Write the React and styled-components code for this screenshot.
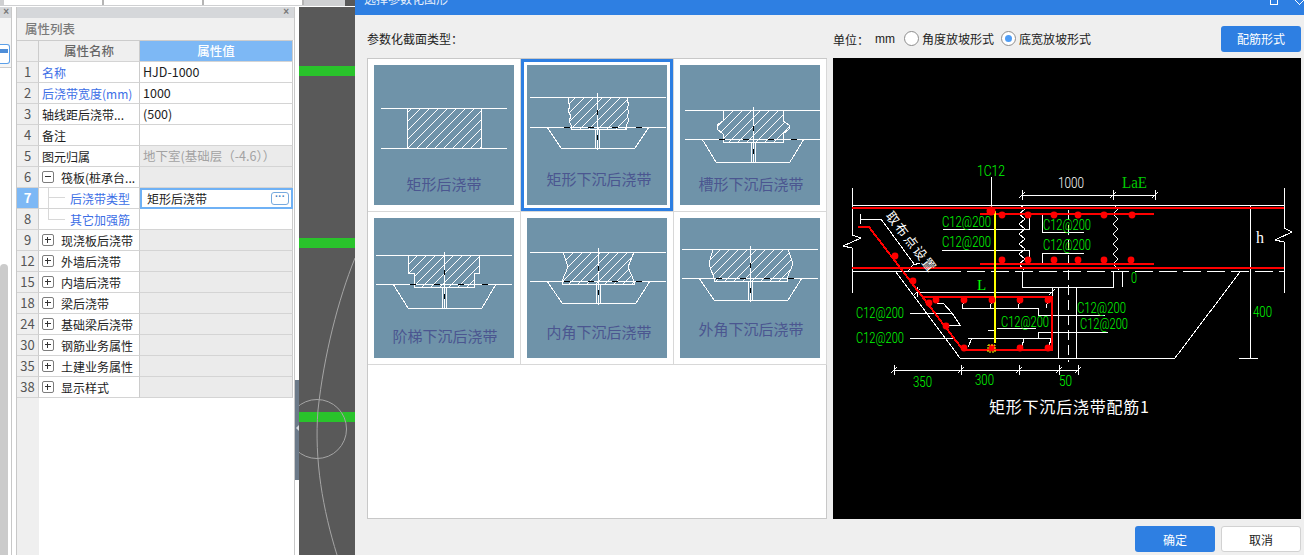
import React from "react";
import styled, { createGlobalStyle } from "styled-components";

const Global = createGlobalStyle`
html,body{margin:0;padding:0;background:#fff;}
body{font-family:"Noto Sans CJK SC","Liberation Sans",sans-serif;font-size:13px;color:#222;}
*{box-sizing:border-box;}
`;

const Page = styled.div`
width:1304px;
height:555px;
display:flex;
overflow:hidden;
`;

/* ---------- left dock ---------- */
const Workspace = styled.div`
width:355px;
height:555px;
display:flex;
flex-direction:column;
flex-shrink:0;
`;
const TopTabs = styled.div`
height:6px;
display:flex;
background:#cfd0d2;
`;
const Tab = styled.div`
width:100px;
height:5px;
background:#fff;
border-right:2px solid #b5b5b5;
margin-left:${p => (p.$first ? "4px" : "0")};
`;
const TabRest = styled.div`
flex:1;
`;
const TabDark = styled.div`
width:10px;
background:#595959;
`;
const DockRow = styled.div`
flex:1;
display:flex;
min-height:0;
padding-top:1px;
`;
const SidePane = styled.div`
width:12px;
margin-right:4px;
border-right:1px solid #c8c8c8;
display:flex;
flex-direction:column;
flex-shrink:0;
`;
const CloseBar = styled.div`
height:11px;
background:#d5d7da;
color:#777;
font:bold 10px/10px "Liberation Sans",sans-serif;
display:flex;
justify-content:flex-end;
padding-right:${p => p.$pad || 4}px;
flex-shrink:0;
`;
const SideTools = styled.div`
height:50px;
background:#f5f5f5;
border-bottom:1px solid #ccc;
padding-top:26px;
`;
const SideIcon = styled.div`
width:10px;
height:20px;
background:#fff;
border:1px solid #5b9fe8;
border-left:none;
border-radius:0 3px 3px 0;
padding:4px 1px 0 0;
&::before{
  content:"";
  display:block;
  height:4px;
  background:#4f8ed8;
}
`;
const SideTrack = styled.div`
flex:1;
padding-top:196px;
`;
const SideThumb = styled.div`
width:8px;
height:100%;
background:#cbcbcb;
border-radius:4px 4px 0 0;
`;
const PropPane = styled.div`
width:279px;
border-left:1px solid #c8c8c8;
border-right:1px solid #c8c8c8;
display:flex;
flex-direction:column;
flex-shrink:0;
`;
const PaneTitle = styled.div`
height:22px;
background:#f0f0f0;
color:#7a7a7a;
font-weight:500;
font-size:12.5px;
line-height:22px;
padding-left:8px;
flex-shrink:0;
`;
const Table = styled.div`
flex:1;
width:276px;
position:relative;
display:flex;
flex-direction:column;
background:linear-gradient(to right,#efefef 22px,#fff 22px);
`;
const Row = styled.div`
height:${p => (p.$head ? 22 : 21)}px;
display:grid;
grid-template-columns:22px 101px 153px;
border-top:${p => (p.$head ? "1px solid #ccc" : "none")};
flex-shrink:0;
`;
const NumCell = styled.div`
background:${p => (p.$active ? "#7db8f5" : "#efefef")};
color:${p => (p.$active ? "#fff" : "#555")};
font-weight:${p => (p.$active ? 700 : 400)};
font-size:13px;
line-height:20px;
text-align:center;
border-right:1px solid #ccc;
border-bottom:1px solid #d4d4d4;
`;
const HeadCell = styled.div`
background:${p => (p.$value ? "#7db8f5" : "#efefef")};
color:${p => (p.$value ? "#fff" : "#666")};
font-weight:500;
font-size:12.5px;
line-height:20px;
text-align:center;
border-right:1px solid #ccc;
border-bottom:1px solid #d4d4d4;
`;
const NameCell = styled.div`
display:flex;
align-items:center;
position:relative;
padding-left:${p => (p.$child ? 31 : 3)}px;
color:${p => (p.$blue ? "#3c6ee6" : "#1c1c1c")};
font-size:12px;
white-space:nowrap;
overflow:hidden;
border-right:1px solid #ccc;
border-bottom:1px solid #d4d4d4;
background:#fff;
`;
const TreeLine = styled.span`
position:absolute;
left:9px;
top:${p => (p.$last ? 0 : -1)}px;
width:17px;
height:${p => (p.$last ? 11 : 21)}px;
border-left:1px solid #d8d8d8;
&::after{
  content:"";
  position:absolute;
  left:0;
  top:10px;
  width:16px;
  border-top:1px solid #d8d8d8;
}
`;
const Expander = styled.span`
width:12px;
height:12px;
border:1px solid #7d7d7d;
border-radius:2px;
margin-right:7px;
flex-shrink:0;
position:relative;
background:#fff;
&::before{
  content:"";
  position:absolute;
  left:2px;
  top:4px;
  width:6px;
  border-top:1px solid #333;
}
&::after{
  content:"";
  display:${p => (p.$open ? "none" : "block")};
  position:absolute;
  left:4px;
  top:2px;
  height:6px;
  border-left:1px solid #333;
}
`;
const ValueCell = styled.div`
padding-left:3px;
font-size:12.5px;
line-height:20px;
white-space:nowrap;
overflow:hidden;
color:${p => (p.$muted ? "#a2a2a2" : "#1c1c1c")};
background:${p => (p.$grey ? "#ebebeb" : "#fff")};
border-right:1px solid #ccc;
border-bottom:1px solid #d4d4d4;
`;
const EditCell = styled.div`
display:flex;
align-items:center;
justify-content:space-between;
padding:0 2px 0 5px;
border:2px solid #6fb1f5;
font-size:12px;
background:#fff;
`;
const MoreButton = styled.span`
width:18px;
height:13px;
border:1px solid #76a9de;
border-radius:3px;
color:#4a84c4;
font:bold 10px/7px "Liberation Sans",sans-serif;
text-align:center;
`;
const Gutter = styled.div`
width:4px;
position:relative;
flex-shrink:0;
`;
const Handle = styled.div`
position:absolute;
left:0;
top:373px;
width:4px;
height:100px;
background:#6c7a89;
&::after{
  content:"";
  position:absolute;
  left:1px;
  top:45px;
  border:3px solid transparent;
  border-right-color:#d5d9de;
  border-left:none;
}
`;
const Canvas = styled.svg`
width:56px;
height:548px;
background:#595959;
display:block;
flex-shrink:0;
`;

/* ---------- dialog ---------- */
const Dialog = styled.div`
width:949px;
height:555px;
background:#efefef;
display:flex;
flex-direction:column;
flex-shrink:0;
`;
const TitleBar = styled.div`
height:15px;
background:#2e7fe2;
color:#e8f0fb;
display:flex;
justify-content:space-between;
padding:0 0 0 9px;
overflow:hidden;
flex-shrink:0;
`;
const TitleText = styled.div`
font-size:12px;
line-height:16px;
margin-top:-9px;
`;
const WinControls = styled.div`
display:flex;
gap:17px;
`;
const MaxIcon = styled.span`
width:8px;
height:5px;
border:1px solid #fff;
border-top:none;
`;
const CloseIcon = styled.svg`
width:9px;
height:5px;
`;
const DialogBody = styled.div`
flex:1;
display:grid;
grid-template-columns:460px 468px;
column-gap:6px;
padding:0 3px 0 12px;
`;
const ColHead = styled.div`
height:43px;
display:flex;
align-items:center;
font-size:12px;
padding-top:4px;
`;
const RightHead = styled(ColHead)`
padding-top:0;
`;
const UnitLabel = styled.span`
margin-top:5px;
width:42px;
`;
const UnitValue = styled.span`
margin-top:5px;
width:29px;
font-family:"Liberation Sans",sans-serif;
font-size:12px;
`;
const RadioWrap = styled.label`
display:flex;
align-items:center;
margin-top:3px;
margin-right:7px;
`;
const RadioDot = styled.span`
width:15px;
height:15px;
border-radius:50%;
background:#fff;
border:1px solid #8d8d8d;
margin-right:3px;
display:flex;
align-items:center;
justify-content:center;
&::after{
  content:"";
  display:${p => (p.$on ? "block" : "none")};
  width:7px;
  height:7px;
  border-radius:50%;
  background:#4f9df5;
}
`;
const Btn = styled.button`
width:80px;
height:26px;
border-radius:3px;
font-family:inherit;
font-size:12px;
padding:0;
background:${p => (p.$plain ? "#fff" : "#2e7fe2")};
color:${p => (p.$plain ? "#222" : "#fff")};
border:${p => (p.$plain ? "1px solid #d2d2d2" : "none")};
`;
const SpecButton = styled(Btn)`
margin-left:auto;
margin-top:4px;
`;
const ThumbGrid = styled.div`
height:461px;
background:#fff;
border:1px solid #c8c8c8;
display:grid;
grid-template-columns:repeat(3,153px);
grid-auto-rows:153px;
align-content:start;
`;
const ThumbCell = styled.div`
padding:6px;
border-right:1px solid #d8d8d8;
border-bottom:1px solid #d8d8d8;
box-shadow:${p => (p.$selected ? "inset 0 0 0 3px #2e7fe2" : "none")};
`;
const ThumbSvg = styled.svg`
width:140px;
height:140px;
display:block;
background:#6f93a9;
`;
const ThumbCaption = styled.text`
fill:#4b5690;
font-size:15px;
text-anchor:middle;
font-family:"Noto Sans CJK SC",sans-serif;
`;
const CadPanel = styled.svg`
width:468px;
height:461px;
display:block;
background:#000;
`;
const CadText = styled.text`
fill:${p => p.$color || "#0f0"};
font-family:${p => (p.$serif ? '"Liberation Serif",serif' : 'Roboto,sans-serif')};
font-weight:${p => (p.$serif ? 400 : 300)};
font-size:${p => p.$size || 14}px;
`;
const CadTitle = styled.text`
fill:#fff;
font-family:"Noto Sans CJK SC",sans-serif;
font-size:${p => p.$size || 16}px;
`;
const Footer = styled.div`
height:36px;
display:flex;
justify-content:flex-end;
align-items:flex-start;
gap:6px;
padding:7px 3px 0 0;
flex-shrink:0;
`;

const rows = [
  { n: 1, name: "名称", blue: true, value: "HJD-1000" },
  { n: 2, name: "后浇带宽度(mm)", blue: true, value: "1000" },
  { n: 3, name: "轴线距后浇带...", value: "(500)" },
  { n: 4, name: "备注" },
  { n: 5, name: "图元归属", value: "地下室(基础层（-4.6））", muted: true, grey: true },
  { n: 6, name: "筏板(桩承台...", expander: "open", grey: true },
  { n: 7, name: "后浇带类型", blue: true, child: true, editing: true, value: "矩形后浇带" },
  { n: 8, name: "其它加强筋", blue: true, child: true, last: true },
  { n: 9, name: "现浇板后浇带", expander: "closed", grey: true },
  { n: 12, name: "外墙后浇带", expander: "closed", grey: true },
  { n: 15, name: "内墙后浇带", expander: "closed", grey: true },
  { n: 18, name: "梁后浇带", expander: "closed", grey: true },
  { n: 24, name: "基础梁后浇带", expander: "closed", grey: true },
  { n: 30, name: "钢筋业务属性", expander: "closed", grey: true },
  { n: 35, name: "土建业务属性", expander: "closed", grey: true },
  { n: 38, name: "显示样式", expander: "closed", grey: true },
];

const thumbs = [
  {
    caption: "矩形后浇带", cx: 70, cy: 125, simple: true, lines: [43, 83], lx: [7, 133],
    shape: "33,43 107,43 107,83 33,83",
  },
  {
    caption: "矩形下沉后浇带", cx: 72, cy: 120, selected: true, lines: [32, 62], lx: [3, 139], c: 70, top: 28, bot: 85,
    shape: "41,32 101,32 100,36 102,39 100,43 102,47 100,51 102,55 100,59 99,62 99,64 44,64 44,60 42,56 44,51 41,46 43,41 41,36",
    trap: "20,62 34,83 108,83 122,62", dbl: [68, 72, 64, 83], dash: [37, 61, 85, 109], vd: [45, 70],
  },
  {
    caption: "槽形下沉后浇带", cx: 71, cy: 125, lines: [45, 74], lx: [5, 140], c: 73, top: 42, bot: 97,
    shape: "43,45 103,45 103,56 109,60 109,64 103,69 103,77 43,77 43,69 37,64 37,60 43,56",
    trap: "22,74 36,97 110,97 124,74", dbl: [71, 75, 77, 97], dash: [39, 63, 88, 111], vd: [61, 84],
  },
  {
    caption: "阶梯下沉后浇带", cx: 71, cy: 124, lines: [37, 66], lx: [2, 138], c: 70, top: 34, bot: 90,
    shape: "34,37 105,37 105,55 100,55 100,69 40,69 40,55 34,55",
    trap: "19,66 34,90 108,90 122,66", dbl: [68, 72, 69, 90], dash: [36, 60, 84, 108], vd: [52, 76],
  },
  {
    caption: "内角下沉后浇带", cx: 72, cy: 120, lines: [34, 63], lx: [3, 139], c: 71, top: 30, bot: 87,
    shape: "36,34 107,34 101,49 107,63 107,66 35,66 35,63 41,49",
    trap: "20,63 35,85 109,85 123,63", dbl: [69, 73, 66, 85], dash: [37, 61, 85, 109], vd: [48, 72],
  },
  {
    caption: "外角下沉后浇带", cx: 71, cy: 117, lines: [31, 60], lx: [2, 138], c: 70, top: 28, bot: 84,
    shape: "33,31 108,31 113,46 107,60 107,63 34,63 34,60 29,46",
    trap: "19,60 34,82 108,82 122,60", dbl: [68, 72, 63, 82], dash: [36, 60, 84, 108], vd: [45, 70],
  },
];

function Thumb({ t, id }) {
  return (
    <ThumbSvg viewBox="0 0 140 140" shapeRendering="crispEdges">
      <defs>
        <pattern id={id} width="9" height="9" patternUnits="userSpaceOnUse">
          <path d="M-1 10L10 -1" stroke="#fff" strokeWidth="1" />
        </pattern>
      </defs>
      <polygon points={t.shape} fill={`url(#${id})`} stroke="#fff" />
      {t.lines.map(y => (
        <line key={y} x1={t.lx[0]} x2={t.simple ? 33 : t.lx[1]} y1={y} y2={y} stroke="#fff" />
      ))}
      {t.simple && t.lines.map(y => <line key={y} x1="107" x2="133" y1={y} y2={y} stroke="#fff" />)}
      {!t.simple && (
        <>
          <polyline points={t.trap} fill="none" stroke="#fff" />
          <line x1={t.c} x2={t.c} y1={t.top} y2={t.bot} stroke="#fff" />
          <line x1={t.dbl[0]} x2={t.dbl[0]} y1={t.dbl[2]} y2={t.dbl[3]} stroke="#fff" />
          <line x1={t.dbl[1]} x2={t.dbl[1]} y1={t.dbl[2]} y2={t.dbl[3]} stroke="#fff" />
          {t.dash.map(x => (
            <line key={x} x1={x} x2={x + 6} y1={t.lines[1]} y2={t.lines[1]} stroke="#000" />
          ))}
          {t.vd.map(y => (
            <line key={y} x1={t.c} x2={t.c} y1={y} y2={y + 5} stroke="#000" />
          ))}
        </>
      )}
      <ThumbCaption x={t.cx} y={t.cy}>{t.caption}</ThumbCaption>
    </ThumbSvg>
  );
}

const whiteLines = [
  "852,188 852,235 861,238 843,246 852,248 852,293",
  "1284,188 1284,228 1292,232 1275,240 1284,242 1284,293",
  "852,205 1284,205",
  "852,271 961,271",
  "860,214 860,224",
  "860,219 881,219 914,264 908,271",
  "913,265 920,263",
  "896,272 960,358 1175,358 1240,272",
  "894,370 1078,370",
  "917,292 1052,292",
  "1022,195 1155,195",
  "991,177 991,207",
  "943,229 1029,229 1029,213",
  "942,250 1029,250 1029,260",
  "1042,213 1042,232 1084,232",
  "1042,263 1042,253 1084,253",
  "1022,271 1022,287 1113,287 1113,271",
  "1122,271 1122,287",
  "1250,205 1250,358",
  "1239,358 1258,358",
  "1058,287 1058,358",
  "1076,287 1076,358",
  "962,308 1038,308 1038,315 1105,315",
  "968,338 1051,338",
  "1038,332 1038,338",
  "1038,332 1108,332",
  "910,313 952,313 960,325 943,325",
  "937,303 943,303 952,313",
  "910,338 953,338",
  "988,330 995,330",
  "997,328 1036,328",
  "964,300 962,308",
  "992,300 990,308",
  "1020,300 1018,308",
  "1048,300 1046,308",
  "972,338 968,347",
  "1024,338 1022,347",
  "1051,338 1049,347",
];
const zigA = "1020,205 1025,209 1019,214 1025,219 1019,224 1025,229 1019,234 1025,239 1019,244 1025,249 1019,254 1025,259 1019,264 1024,270";
const zigB = "1114,205 1118,209 1113,214 1118,219 1113,224 1118,229 1113,234 1118,239 1113,244 1118,249 1113,254 1118,259 1113,264 1119,270";
const ticks = [[1022, 195], [1113, 195], [1155, 195], [894, 370], [961, 370], [1019, 370], [1059, 370], [1078, 370], [917, 292], [1052, 292]];
const dots = [
  [1002, 215], [1028, 215], [1054, 215], [1078, 215], [1104, 215], [1132, 215],
  [1002, 260], [1028, 260], [1054, 260], [1078, 260], [1104, 260], [1131, 260],
  [895, 256], [913, 281], [929, 303], [936, 300], [946, 326], [964, 348],
  [964, 300], [992, 300], [1020, 300], [1048, 300], [992, 348], [1020, 348], [1048, 348],
];
const labels = [
  { t: "1C12", x: 977, y: 176, w: 28 },
  { t: "C12@200", x: 942, y: 227, w: 49 },
  { t: "C12@200", x: 942, y: 247, w: 49 },
  { t: "C12@200", x: 1043, y: 230, w: 48 },
  { t: "C12@200", x: 1043, y: 250, w: 48 },
  { t: "C12@200", x: 856, y: 318, w: 48 },
  { t: "C12@200", x: 856, y: 343, w: 48 },
  { t: "C12@200", x: 1001, y: 327, w: 48 },
  { t: "C12@200", x: 1077, y: 313, w: 49 },
  { t: "C12@200", x: 1080, y: 329, w: 48 },
  { t: "400", x: 1253, y: 317, w: 19 },
  { t: "350", x: 913, y: 387, w: 19 },
  { t: "300", x: 975, y: 385, w: 19 },
  { t: "50", x: 1059, y: 386, w: 13 },
  { t: "0", x: 1131, y: 283, w: 6 },
  { t: "1000", x: 1058, y: 188, w: 26, color: "#fff" },
];

function CadDrawing() {
  return (
    <CadPanel viewBox="833 58 468 461">
      <g shapeRendering="crispEdges" fill="none" stroke="#fff" strokeWidth="1">
        {whiteLines.map(p => <polyline key={p} points={p} />)}
        <polyline points={zigA} />
        <polyline points={zigB} />
        <line x1="967" x2="1284" y1="271" y2="271" strokeDasharray="18 6" />
        <line x1="1068" x2="1068" y1="210" y2="362" strokeDasharray="10 5" />
        <line x1="1060" x2="1076" y1="358" y2="358" />
        {ticks.map(([x, y]) => (
          <path key={`${x}-${y}`} d={`M${x} ${y - 5}V${y + 5}M${x - 3} ${y + 3}L${x + 3} ${y - 3}`} />
        ))}
      </g>
      <g shapeRendering="crispEdges" fill="none" stroke="#f00" strokeWidth="2">
        <line x1="852" x2="1284" y1="208" y2="208" />
        <line x1="852" x2="1284" y1="268" y2="268" />
        <line x1="980" x2="1154" y1="214" y2="214" />
        <line x1="980" x2="1154" y1="264" y2="264" />
        <polyline points="858,227 869,227 963,350 1052,350 1052,297 922,297" />
      </g>
      <line x1="995" x2="995" y1="211" y2="343" stroke="#ff0" strokeWidth="2" shapeRendering="crispEdges" />
      <circle cx="991" cy="211" r="4.5" fill="#f00" />
      {dots.map(([x, y]) => <circle key={`${x}-${y}`} cx={x} cy={y} r="3.4" fill="#f00" />)}
      <rect x="988" y="345" width="7" height="7" fill="none" stroke="#ff0" strokeDasharray="2 1" />
      {labels.map(l => (
        <CadText key={`${l.x}-${l.y}`} x={l.x} y={l.y} textLength={l.w} lengthAdjust="spacingAndGlyphs" $color={l.color}>
          {l.t}
        </CadText>
      ))}
      <CadText x="1122" y="188" $serif $size={17} $color="#0c0" textLength="25" lengthAdjust="spacingAndGlyphs">LaE</CadText>
      <CadText x="1256" y="243" $serif $size={16} $color="#fff">h</CadText>
      <CadText x="977" y="290" $serif $size={15}>L</CadText>
      <CadTitle x="885" y="216" $size={13} textLength="72" transform="rotate(52 885 216)">取布点设置</CadTitle>
      <CadTitle x="989" y="413" textLength="160">矩形下沉后浇带配筋1</CadTitle>
    </CadPanel>
  );
}

function PropRow({ r }) {
  return (
    <Row>
      <NumCell $active={r.editing}>{r.n}</NumCell>
      <NameCell $blue={r.blue} $child={r.child}>
        {r.child && <TreeLine $last={r.last} />}
        {r.expander && <Expander $open={r.expander === "open"} />}
        {r.name}
      </NameCell>
      {r.editing ? (
        <EditCell>{r.value}<MoreButton>···</MoreButton></EditCell>
      ) : (
        <ValueCell $muted={r.muted} $grey={r.grey}>{r.value}</ValueCell>
      )}
    </Row>
  );
}

export default function App() {
  return (
    <Page>
      <Global />
      <Workspace>
        <TopTabs>
          <Tab $first /><Tab /><Tab />
          <TabRest />
          <TabDark />
        </TopTabs>
        <DockRow>
          <SidePane>
            <CloseBar $pad={2}>×</CloseBar>
            <SideTools><SideIcon /></SideTools>
            <SideTrack><SideThumb /></SideTrack>
          </SidePane>
          <PropPane>
            <CloseBar $pad={5}>×</CloseBar>
            <PaneTitle>属性列表</PaneTitle>
            <Table>
              <Row $head>
                <HeadCell />
                <HeadCell>属性名称</HeadCell>
                <HeadCell $value>属性值</HeadCell>
              </Row>
              {rows.map(r => <PropRow key={r.n} r={r} />)}
            </Table>
          </PropPane>
          <Gutter><Handle /></Gutter>
          <Canvas viewBox="299 7 56 548">
            <g fill="#29c32b">
              <rect x="299" y="66" width="56" height="10" />
              <rect x="299" y="238" width="56" height="10" />
              <rect x="299" y="412" width="56" height="10" />
            </g>
            <g fill="none" stroke="#a5a5a5" strokeWidth="1">
              <circle cx="317" cy="429" r="29.5" />
              <path d="M355 258C338 300 324 355 318 410C314 460 323 510 337 555" />
            </g>
          </Canvas>
        </DockRow>
      </Workspace>
      <Dialog>
        <TitleBar>
          <TitleText>选择参数化图形</TitleText>
          <WinControls>
            <MaxIcon />
            <CloseIcon viewBox="0 0 9 5"><path d="M0 0L5 5M9 0L4 5" stroke="#fff" /></CloseIcon>
          </WinControls>
        </TitleBar>
        <DialogBody>
          <div>
            <ColHead>参数化截面类型：</ColHead>
            <ThumbGrid>
              {thumbs.map((t, i) => (
                <ThumbCell key={t.caption} $selected={t.selected}>
                  <Thumb t={t} id={`hatch${i}`} />
                </ThumbCell>
              ))}
            </ThumbGrid>
          </div>
          <div>
            <RightHead>
              <UnitLabel>单位：</UnitLabel>
              <UnitValue>mm</UnitValue>
              <RadioWrap><RadioDot />角度放坡形式</RadioWrap>
              <RadioWrap><RadioDot $on />底宽放坡形式</RadioWrap>
              <SpecButton>配筋形式</SpecButton>
            </RightHead>
            <CadDrawing />
          </div>
        </DialogBody>
        <Footer>
          <Btn>确定</Btn>
          <Btn $plain>取消</Btn>
        </Footer>
      </Dialog>
    </Page>
  );
}
